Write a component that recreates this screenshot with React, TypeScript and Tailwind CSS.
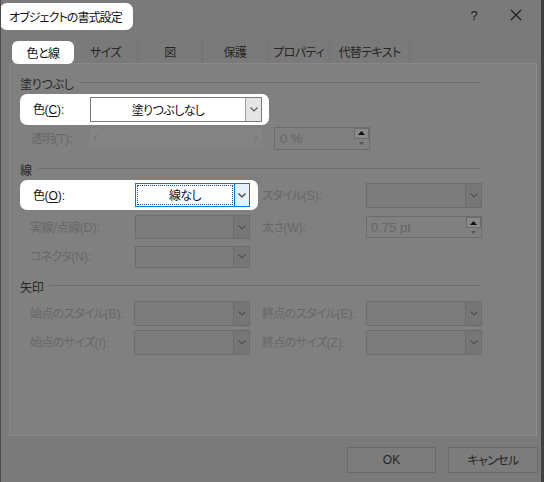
import React from "react";

const Chevron = ({ color = "#4a4a4a" }: { color?: string }) => (
  <svg width="8" height="5" viewBox="0 0 8 5">
    <path d="M0.5 0.5 L4 4 L7.5 0.5" fill="none" stroke={color} strokeWidth="1.1" />
  </svg>
);

const SpinArrows = () => (
  <div className="flex flex-col w-[15px] h-full">
    <div className="flex-1 flex items-center justify-center border border-[#6c6c6c] bg-[#8a8a8a]">
      <svg width="7" height="4" viewBox="0 0 7 4"><path d="M0 4 L3.5 0 L7 4 Z" fill="#111" /></svg>
    </div>
    <div className="flex-1 flex items-center justify-center">
      <svg width="5" height="3" viewBox="0 0 5 3"><path d="M0 0 L2.5 3 L5 0 Z" fill="#555" /></svg>
    </div>
  </div>
);

const DisabledDrop = ({ w, h = 25 }: { w: string; h?: number }) => (
  <div className={`${w} flex border border-[#6c6c6c] bg-[#7c7c7c]`} style={{ height: h }}>
    <div className="flex-1" />
    <div className="w-[16px] border-l border-[#6c6c6c] bg-[#767676] flex items-center justify-center">
      <Chevron color="#505050" />
    </div>
  </div>
);

const Header = ({ text, mt }: { text: string; mt: string }) => (
  <div className={`flex items-center h-[20px] w-[460px] ${mt}`}>
    <span className="text-[#262626] tracking-[-0.3px]">{text}</span>
    <div className="flex-1 h-px bg-[#6e6e6e] ml-[6px] -mt-[4px]" />
  </div>
);

const L = ({ j, l, u, dis = true }: { j: string; l: string; u?: boolean; dis?: boolean }) => (
  <span className={`whitespace-nowrap ${dis ? "text-[#676767]" : "text-[#111]"}`}>
    <span className="tracking-[-0.6px]">{j}</span>
    <span className="font-['Liberation_Sans',sans-serif] text-[12px]">
      (<span className={u ? "underline underline-offset-2" : ""}>{l}</span>):
    </span>
  </span>
);

export default function App() {
  return (
    <div className="w-[544px] h-[482px] bg-[#7a7a7a] border-l border-[#4c4c4c] border-r-[3px] border-r-[#404040] overflow-hidden font-['Noto_Sans_CJK_JP',sans-serif] [font-feature-settings:'palt'] text-[12px] leading-none text-[#262626] flex flex-col">
      {/* Title bar */}
      <div className="h-[31px] flex items-start shrink-0 -ml-px">
        <div className="mt-[3px] h-[27px] w-[133px] bg-white rounded-[7px] flex items-center pl-[9px] text-[#111] text-[12px] whitespace-nowrap tracking-[-0.9px]">
          オブジェクトの書式設定
        </div>
        <div className="ml-auto flex items-center h-[30px] text-[#1a1a1a]">
          <span className="w-[20px] text-center text-[13px] mr-[26px] font-['Liberation_Sans',sans-serif]">?</span>
          <svg width="12" height="12" viewBox="0 0 12 12" className="mr-[19px]">
            <path d="M1 1 L11 11 M11 1 L1 11" stroke="#1a1a1a" strokeWidth="1.1" />
          </svg>
        </div>
      </div>

      {/* Tabs */}
      <div className="flex items-end h-[32px] pl-[11px] shrink-0 tracking-[-0.6px]">
        <div className="w-[62px] h-[23px] mb-[-1px] bg-white rounded-[6px] flex items-center justify-center text-[#111] relative z-10">
          色と線
        </div>
        <div className="w-[64px] h-[22px] border-r border-[#727272] flex items-center justify-center">サイズ</div>
        <div className="w-[65px] h-[22px] border-r border-[#727272] flex items-center justify-center">図</div>
        <div className="w-[65px] h-[22px] border-r border-[#727272] flex items-center justify-center">保護</div>
        <div className="w-[62px] h-[22px] border-r border-[#727272] flex items-center justify-center">プロパティ</div>
        <div className="w-[80px] h-[22px] border-r border-[#727272] flex items-center justify-center">代替テキスト</div>
      </div>

      {/* Panel */}
      <div className="ml-[8px] w-[528px] h-[373px] bg-[#808080] border border-[#888888] border-r-[#8c8c8c] pl-[10px] pt-[10px] flex flex-col shrink-0">
        <Header text="塗りつぶし" mt="" />

        {/* Fill color highlight row */}
        <div className="w-[249px] h-[31px] bg-white rounded-[7px] flex items-center pl-[13px] text-[#111]">
          <span className="w-[57px]">
            <L j="色" l="C" u dis={false} />
          </span>
          <div className="w-[172px] h-[25px] border border-[#7a7a7a] flex">
            <div className="flex-1 flex items-center justify-center text-[#111] tracking-[-0.6px]">塗りつぶしなし</div>
            <div className="w-[16px] border-l border-[#a0a0a0] bg-[#e5e5e5] flex items-center justify-center">
              <Chevron color="#555" />
            </div>
          </div>
        </div>

        {/* Transparency row */}
        <div className="h-[24px] mt-[1px] flex items-center pl-[11px]">
          <span className="w-[58px]"><L j="透明" l="T" /></span>
          <div className="w-[173px] h-[20px] bg-[#848484] flex items-center justify-between px-[4px]">
            <svg width="5" height="8" viewBox="0 0 5 8"><path d="M4.5 0.5 L1 4 L4.5 7.5" fill="none" stroke="#6e6e6e" /></svg>
            <svg width="5" height="8" viewBox="0 0 5 8"><path d="M0.5 0.5 L4 4 L0.5 7.5" fill="none" stroke="#6e6e6e" /></svg>
          </div>
          <div className="ml-[12px] w-[96px] h-[23px] border border-[#6c6c6c] flex">
            <div className="flex-1 flex items-center pl-[5px] text-[#656565] text-[13px] font-['Liberation_Sans',sans-serif]">0 %</div>
            <SpinArrows />
          </div>
        </div>

        <Header text="線" mt="mt-[10px]" />

        {/* Line color highlight row */}
        <div className="flex items-center">
          <div className="w-[238px] h-[30px] bg-white rounded-[7px] flex items-center pl-[13px] text-[#111]">
            <span className="w-[102px]">
              <L j="色" l="O" u dis={false} />
            </span>
            <div className="w-[115px] h-[24px] border border-[#0078d7] flex">
              <div className="flex-1 p-[1px]">
                <div className="w-full h-full border border-dotted border-[#1a4f9a] flex items-center justify-center bg-white tracking-[-0.6px]">線なし</div>
              </div>
              <div className="w-[15px] border-l border-[#0078d7] bg-[#e5f1fb] flex items-center justify-center">
                <Chevron color="#333" />
              </div>
            </div>
          </div>
          <span className="ml-[4px] w-[104px]"><L j="スタイル" l="S" /></span>
          <DisabledDrop w="w-[116px]" />
        </div>

        {/* Dash row */}
        <div className="h-[24px] mt-[5px] flex items-center pl-[10px]">
          <span className="w-[105px]"><L j="実線/点線" l="D" /></span>
          <DisabledDrop w="w-[115px]" h={24} />
          <span className="ml-[12px] w-[104px]"><L j="太さ" l="W" /></span>
          <div className="w-[116px] h-[22px] border border-[#6c6c6c] flex">
            <div className="flex-1 flex items-center pl-[4px] text-[#656565] text-[13px] font-['Liberation_Sans',sans-serif]">0.75 pt</div>
            <SpinArrows />
          </div>
        </div>

        {/* Connector row */}
        <div className="h-[23px] mt-[6px] flex items-center pl-[10px]">
          <span className="w-[105px]"><L j="コネクタ" l="N" /></span>
          <DisabledDrop w="w-[115px]" h={22} />
        </div>

        <Header text="矢印" mt="mt-[9px]" />

        <div className="h-[25px] mt-[4px] flex items-center pl-[10px]">
          <span className="w-[104px]"><L j="始点のスタイル" l="B" /></span>
          <DisabledDrop w="w-[116px]" h={25} />
          <span className="ml-[12px] w-[104px]"><L j="終点のスタイル" l="E" /></span>
          <DisabledDrop w="w-[116px]" h={25} />
        </div>

        <div className="h-[25px] mt-[4px] flex items-center pl-[10px]">
          <span className="w-[104px]"><L j="始点のサイズ" l="I" /></span>
          <DisabledDrop w="w-[116px]" h={25} />
          <span className="ml-[12px] w-[104px]"><L j="終点のサイズ" l="Z" /></span>
          <DisabledDrop w="w-[116px]" h={25} />
        </div>
      </div>

      {/* Buttons */}
      <div className="flex justify-end gap-[12px] pr-[3px] mt-[11px]">
        <div className="w-[89px] h-[26px] border border-[#6a6a6a] bg-[#7c7c7c] flex items-center justify-center text-[#262626] font-['Liberation_Sans',sans-serif] text-[12px]">
          OK
        </div>
        <div className="w-[90px] h-[26px] border border-[#6a6a6a] bg-[#7c7c7c] flex items-center justify-center text-[#262626] tracking-[-0.6px]">
          キャンセル
        </div>
      </div>
    </div>
  );
}
